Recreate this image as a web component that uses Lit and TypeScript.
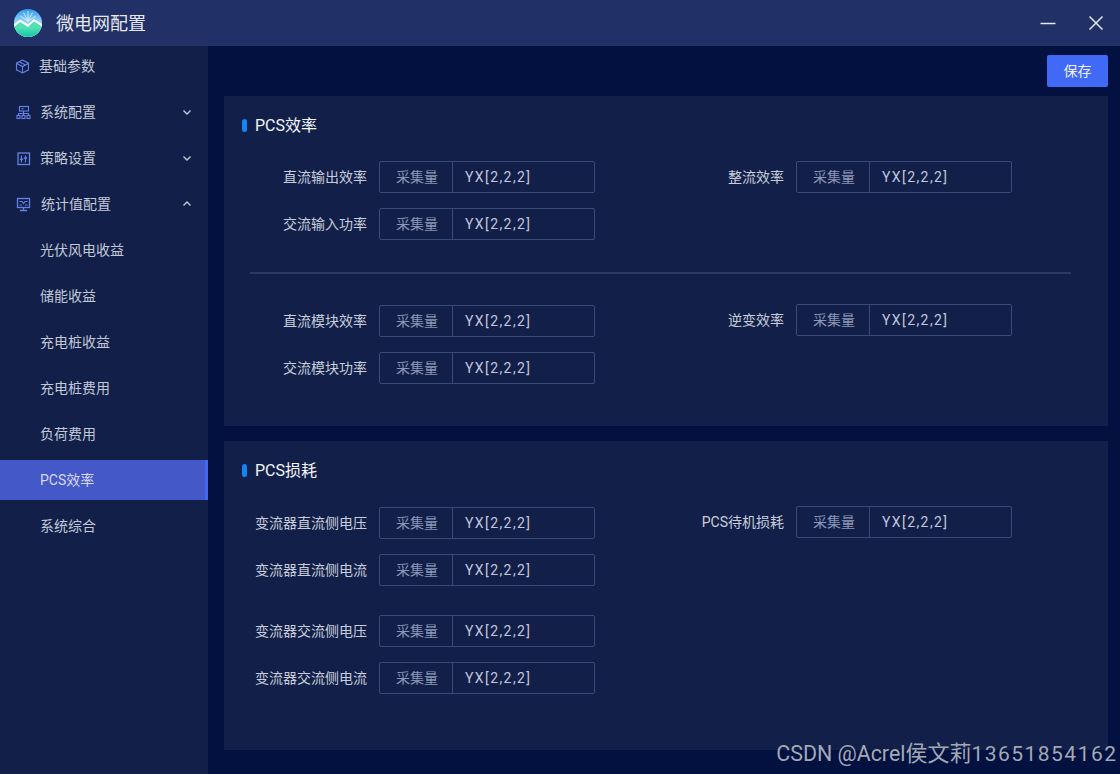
import { LitElement, html, css, svg } from "lit";
import { customElement } from "lit/decorators.js";

const icons: Record<string, unknown> = {
  box: svg`<path d="M7.5 1 13.5 4.2V10.8L7.5 14 1.5 10.8V4.2Z"/><path d="M1.8 4.4 7.5 7.6 13.2 4.4M7.5 7.6V13.8"/><path d="M4.4 2.8 10.4 6"/>`,
  net: svg`<rect x="3.5" y="1.5" width="9" height="4.5"/><path d="M5.5 3.7H7.5"/><path d="M7.5 6V8.5M2.5 10.5V8.5H12.5V10.5M7.5 8.5V10.5"/><rect x="1" y="10.5" width="3" height="3"/><rect x="6" y="10.5" width="3" height="3"/><rect x="11" y="10.5" width="3" height="3"/>`,
  sliders: svg`<rect x="2" y="2" width="11.5" height="11.5" stroke-width="1.3"/><path d="M5.5 4.5V11.5M9.5 4.5V11.5"/><path d="M4 9 5.5 7.5 7 9M8 6.5 9.5 8 11 6.5" stroke-width="1.2"/>`,
  screen: svg`<rect x="1.5" y="1.5" width="12" height="9" stroke-width="1.3"/><path d="M7.5 10.5V13M4 13.5H11" stroke-width="1.3"/><path d="M3.5 4.5H6L7.5 6.5 9 4.5H11.5M3.5 8H6M9 8H11.5"/>`,
};

@customElement("app-root")
export class AppRoot extends LitElement {
  static styles = css`
    :host {
      display: block;
      width: 1120px;
      height: 774px;
      overflow: hidden;
      position: relative;
      font-family: Roboto, "Noto Sans CJK SC", sans-serif;
      font-size: 14px;
      line-height: 20px;
      background: #021140;
    }
    .titlebar {
      height: 46px;
      background: #213066;
      display: flex;
      align-items: center;
      padding: 0 14px;
      color: #e6e8f0;
    }
    .logo { width: 28px; height: 28px; display: block; }
    .app-name { font-size: 18px; margin-left: 14px; flex: 1; padding-top: 2px; }
    .win { display: block; }
    .win.min { width: 16px; height: 16px; margin-right: 32px; }
    .win.close { width: 16px; height: 16px; margin-right: 2px; }
    .body { display: flex; height: 728px; }
    .sidebar {
      width: 208px;
      background: #122049;
      flex: none;
    }
    .item {
      height: 40px;
      margin-bottom: 6px;
      display: flex;
      align-items: center;
      color: #c3c8d8;
      box-sizing: border-box;
    }
    .item .ico {
      width: 15px;
      height: 15px;
      margin-left: 16px;
      fill: none;
      stroke: #6580e6;
      stroke-width: 1.1;
      flex: none;
    }
    .item .lbl { margin-left: 9px; flex: 1; }
    .item.wide .lbl { margin-left: 10px; }
    .item.tight .ico { margin-left: 15px; }
    .item .chev { width: 10px; height: 10px; margin-right: 16px; fill: none; stroke: #c3c8d8; stroke-width: 1.4; }
    .item.sub { padding-left: 40px; }
    .item.active {
      background: #4558c7;
      border-right: 3px solid #4067f5;
      color: #d5daf2;
    }
    .main {
      flex: 1;
      padding: 9px 12px 0 16px;
      min-width: 0;
    }
    .toolbar { display: flex; justify-content: flex-end; margin-bottom: 9px; }
    .save {
      width: 61px;
      height: 32px;
      border: none;
      border-radius: 2px;
      background: #4069f6;
      color: #eef1fb;
      font: inherit;
      padding: 0;
    }
    .card {
      background: #122049;
      padding-top: 19px;
      margin-bottom: 15px;
    }
    .card.a { padding-bottom: 42px; }
    .card.b { padding-bottom: 56px; }
    .card-title {
      display: flex;
      align-items: center;
      height: 20px;
      margin-left: 18px;
      font-size: 16px;
      color: #f2f4fa;
    }
    .card-title span { padding-top: 2px; }
    .card-title i {
      width: 5px;
      height: 13px;
      border-radius: 3px;
      background: #1485f5;
      margin-right: 8px;
    }
    .group { display: flex; margin-top: 26px; }
    .group.tight { margin-top: 30px; }
    .group.far { margin-top: 29px; }
    .col { width: 417px; display: flex; flex-direction: column; gap: 15px; }
    .col.low { padding-top: 1px; }
    .field { display: flex; align-items: center; }
    .field label {
      width: 143px;
      text-align: right;
      margin-right: 12px;
      color: #c9cddb;
      white-space: nowrap;
    }
    .box {
      width: 216px;
      height: 32px;
      box-sizing: border-box;
      border: 1px solid #3a4a78;
      border-radius: 2px;
      display: flex;
      align-items: center;
    }
    .prefix {
      width: 73px;
      height: 100%;
      box-sizing: border-box;
      border-right: 1px solid #3a4a78;
      padding-left: 2px;
      text-align: center;
      line-height: 30px;
      color: #8d96b8;
    }
    .value {
      margin-left: 12px;
      color: #c0c6dc;
      font-kerning: none;
      letter-spacing: 1.42px;
    }
    hr {
      border: none;
      height: 2px;
      background: #2b3860;
      margin: 32px 37px 0 26px;
    }
    .watermark {
      position: absolute;
      right: 4px;
      top: 739px;
      font-size: 21.4px;
      line-height: 30px;
      color: #a3a8b4;
      white-space: nowrap;
    }
    .watermark .cjk { font-size: 22px; }
    .watermark .num { font-size: 21px; letter-spacing: 1.47px; margin-right: -1.47px; }
  `;

  private menu(icon: string, label: string, chev?: "down" | "up", cls = "") {
    return html`<div class="item ${cls}">
      <svg class="ico" viewBox="0 0 15 15">${icons[icon]}</svg>
      <span class="lbl">${label}</span>
      ${chev
        ? html`<svg class="chev" viewBox="0 0 10 10"><path d="${chev === "down" ? "M1.5 3.5 5 7 8.5 3.5" : "M1.5 6.5 5 3 8.5 6.5"}"/></svg>`
        : ""}
    </div>`;
  }

  private field(label: string) {
    return html`<div class="field">
      <label>${label}</label>
      <div class="box"><span class="prefix">采集量</span><span class="value">YX[2,2,2]</span></div>
    </div>`;
  }

  private col(labels: string[], low = false) {
    return html`<div class="col ${low ? "low" : ""}">${labels.map((l) => this.field(l))}</div>`;
  }

  render() {
    const subs = ["光伏风电收益", "储能收益", "充电桩收益", "充电桩费用", "负荷费用"];
    return html`
      <div class="titlebar">
        <svg class="logo" viewBox="0 0 28 28">
          <defs>
            <linearGradient id="sky" x1="0" y1="0" x2="0" y2="1"><stop offset="0" stop-color="#2f97f0"/><stop offset="0.55" stop-color="#a8e2f6"/></linearGradient>
            <linearGradient id="sea" x1="0" y1="0" x2="0" y2="1"><stop offset="0.4" stop-color="#52e0b2"/><stop offset="1" stop-color="#12c6a8"/></linearGradient>
            <clipPath id="disc"><circle cx="14" cy="14" r="14"/></clipPath>
          </defs>
          <g clip-path="url(#disc)">
            <rect width="28" height="28" fill="url(#sky)"/>
            <path d="M14 12 14 2M14 12 9.5 3.5M14 12 18.5 3.5M14 12 6 7M14 12 22 7" stroke="#e4f6fc" stroke-width="0.8" fill="none"/>
            <path d="M0 15.5 6 10.5 14 15.5 20 10 28 15V28H0Z" fill="#fff"/>
            <path d="M0 18 6 13 14 18 20 12.5 28 17.5V28H0Z" fill="url(#sea)"/>
          </g>
        </svg>
        <span class="app-name">微电网配置</span>
        <svg class="win min" viewBox="0 0 16 16"><path d="M0.5 8.5H15.5" stroke="#e6e8f0" stroke-width="1.5"/></svg>
        <svg class="win close" viewBox="0 0 16 16"><path d="M1.5 1.5 14.5 14.5M14.5 1.5 1.5 14.5" stroke="#e6e8f0" stroke-width="1.5"/></svg>
      </div>
      <div class="body">
        <nav class="sidebar">
          ${this.menu("box", "基础参数", undefined, "tight")}
          ${this.menu("net", "系统配置", "down")}
          ${this.menu("sliders", "策略设置", "down")}
          ${this.menu("screen", "统计值配置", "up", "wide")}
          ${subs.map((s) => html`<div class="item sub">${s}</div>`)}
          <div class="item sub active">PCS效率</div>
          <div class="item sub">系统综合</div>
        </nav>
        <main class="main">
          <div class="toolbar"><button class="save">保存</button></div>
          <section class="card a">
            <div class="card-title"><i></i><span>PCS效率</span></div>
            <div class="group">
              ${this.col(["直流输出效率", "交流输入功率"])}
              ${this.col(["整流效率"])}
            </div>
            <hr />
            <div class="group tight">
              ${this.col(["直流模块效率", "交流模块功率"], true)}
              ${this.col(["逆变效率"])}
            </div>
          </section>
          <section class="card b">
            <div class="card-title"><i></i><span>PCS损耗</span></div>
            <div class="group">
              ${this.col(["变流器直流侧电压", "变流器直流侧电流"], true)}
              ${this.col(["PCS待机损耗"])}
            </div>
            <div class="group far">
              ${this.col(["变流器交流侧电压", "变流器交流侧电流"])}
            </div>
          </section>
        </main>
      </div>
      <div class="watermark">CSDN @Acrel<span class="cjk">侯文莉</span><span class="num">13651854162</span></div>
    `;
  }
}
